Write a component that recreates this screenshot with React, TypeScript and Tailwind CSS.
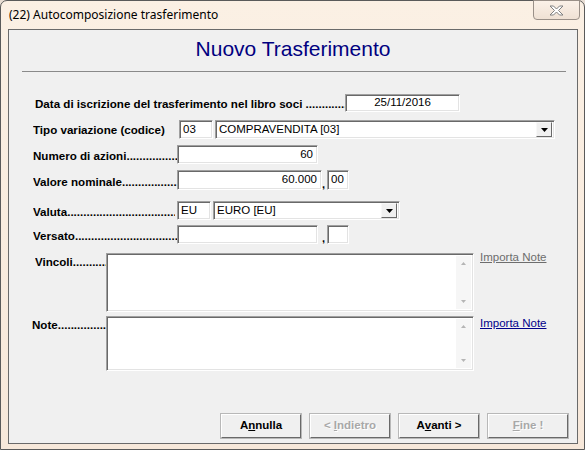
import React from "react";

const ui = { fontFamily: '"Liberation Sans", Arial, sans-serif' };

const sunken =
  "bg-white border border-solid border-t-[#a0a0a0] border-l-[#a0a0a0] border-b-white border-r-white shadow-[inset_1px_1px_0_#696969,inset_-1px_-1px_0_#e3e3e3]";

function Field({ w, h = 19, value = "", align = "left" }: { w: number; h?: number; value?: string; align?: "left" | "right" | "center" }) {
  const a = align === "right" ? "justify-end pr-[4px]" : align === "center" ? "justify-center" : "justify-start pl-[3px]";
  return (
    <div className={`${sunken} flex items-center ${a} text-[11.5px] text-black shrink-0`} style={{ width: w, height: h }}>
      {value}
    </div>
  );
}

function Combo({ w, value }: { w: number; value: string }) {
  return (
    <div className={`${sunken} flex items-center shrink-0 h-[19px] p-[2px]`} style={{ width: w }}>
      <span className="flex-1 pl-[1px] text-[11.5px] text-black whitespace-nowrap">{value}</span>
      <div className="w-[16px] h-[15px] bg-[#f0f0f0] border border-solid border-t-[#f8f8f8] border-l-[#f8f8f8] border-b-[#696969] border-r-[#696969] flex items-center justify-center">
        <svg width="7" height="4" viewBox="0 0 7 4">
          <path d="M0 0h7L3.5 4z" fill="#000" />
        </svg>
      </div>
    </div>
  );
}

function Label({ w, text, ml = 24, dots = true }: { w: number; text: string; ml?: number; dots?: boolean }) {
  return (
    <div className="shrink-0 overflow-hidden whitespace-nowrap text-[11.6px] font-bold text-black" style={{ width: w, marginLeft: ml }}>
      {text}
      {dots ? "........................................" : ""}
    </div>
  );
}

function Memo({ h }: { h: number }) {
  return (
    <div className={`${sunken} flex shrink-0 w-[368px] p-[2px]`} style={{ height: h }}>
      <div className="flex-1" />
      <div className="w-[15px] bg-[#f6f6f6] flex flex-col justify-between items-center py-[6px]">
        <svg width="5" height="3" viewBox="0 0 5 3">
          <path d="M0 3h5L2.5 0z" fill="#b5b5b5" />
        </svg>
        <svg width="5" height="3" viewBox="0 0 5 3">
          <path d="M0 0h5L2.5 3z" fill="#b5b5b5" />
        </svg>
      </div>
    </div>
  );
}

function Btn({ children, disabled }: { children: React.ReactNode; disabled?: boolean }) {
  return (
    <div
      className={`w-[80px] h-[24px] flex items-center justify-center whitespace-pre bg-[#f0f0f0] border border-solid border-t-white border-l-white border-b-[#696969] border-r-[#696969] shadow-[0_0_0_1px_#b8b8b8] text-[11.5px] font-bold ${
        disabled ? "text-[#a8a8a8] [text-shadow:1px_1px_0_#ffffff]" : "text-black"
      }`}
    >
      {children}
    </div>
  );
}

export default function App() {
  return (
    <div className="w-[585px] h-[450px] bg-[#e8ddd3] overflow-hidden" style={ui}>
      <div className="relative w-[585px] h-[450px] rounded-t-[7px] border border-solid border-[#5a5a5a] bg-gradient-to-b from-[#fbf0e4] to-[#f7e8da] flex flex-col">
        <div className="h-[28px] flex items-center pl-[8px] text-[12px] text-black" style={{ fontFamily: '"Noto Sans", "Liberation Sans", sans-serif' }}>
          (22) Autocomposizione trasferimento
        </div>
        <div className="absolute top-[-1px] right-[4px] w-[47px] h-[20px] rounded-b-[4px] border border-solid border-[#9a9088] bg-gradient-to-b from-[#fbf1e8] to-[#efe1d4] flex items-center justify-center">
          <svg width="15" height="11" viewBox="0 0 15 11">
            <path
              d="M1 1h3.5L7.5 4 10.5 1H14L9.5 5.5 14 10h-3.5L7.5 7 4.5 10H1l4.5-4.5z"
              fill="#fff"
              stroke="#7f7f7f"
              strokeWidth="1"
              strokeLinejoin="round"
            />
          </svg>
        </div>
        <div className="ml-[7px] w-[570px] h-[415px] border border-solid border-[#6a6a6a] bg-[#f0f0f0] flex flex-col">
          <div className="mt-[5px] h-[28px] flex items-center justify-center text-[21px] text-[#000080]">
            Nuovo Trasferimento
          </div>
          <div className="mt-[8px] ml-[13px] w-[544px] h-[1px] bg-[#8a8a8a]" />

          <div className="mt-[22px] flex items-end h-[18px]">
            <Label w={310} ml={26} text="Data di iscrizione del trasferimento nel libro soci " />
            <Field w={115} h={18} value="25/11/2016" align="center" />
          </div>

          <div className="mt-[8px] flex items-center gap-[2px]">
            <Label w={144} text="Tipo variazione (codice)" dots={false} />
            <Field w={34} value="03" />
            <Combo w={340} value="COMPRAVENDITA [03]" />
          </div>

          <div className="mt-[6px] flex items-end">
            <Label w={144} text="Numero di azioni" />
            <Field w={141} value="60" align="right" />
          </div>

          <div className="mt-[6px] flex items-end">
            <Label w={144} text="Valore nominale" />
            <Field w={145} h={20} value="60.000" align="right" />
            <span className="w-[5px] text-[11px] font-bold leading-[12px] self-end">,</span>
            <Field w={22} h={20} value="00" />
          </div>

          <div className="mt-[11px] flex items-end gap-[2px]">
            <Label w={142} text="Valuta" />
            <Field w={34} value="EU" />
            <Combo w={187} value="EURO [EU]" />
          </div>

          <div className="mt-[5px] flex items-end">
            <Label w={144} text="Versato" />
            <Field w={141} value="" />
            <span className="w-[9px] pl-[4px] text-[11px] font-bold leading-[12px] self-end">,</span>
            <Field w={22} value="" />
          </div>

          <div className="mt-[9px] flex items-start">
            <div className="mt-[0px]">
              <Label w={71} ml={26} text="Vincoli" />
            </div>
            <Memo h={59} />
            <span className="ml-[6px] mt-[-4px] text-[11.5px] text-[#6d6d6d] underline">Importa Note</span>
          </div>

          <div className="mt-[4px] flex items-start">
            <div className="mt-[0px]">
              <Label w={74} ml={23} text="Note" />
            </div>
            <Memo h={55} />
            <span className="ml-[6px] mt-[-1px] text-[11.5px] text-[#00008b] underline">Importa Note</span>
          </div>

          <div className="mt-[43px] ml-[212px] flex gap-[9px]">
            <Btn>
              A<u>n</u>nulla
            </Btn>
            <Btn disabled>
              {"< "}
              <u>I</u>ndietro
            </Btn>
            <Btn>
              A<u>v</u>anti {">"}
            </Btn>
            <Btn disabled>
              <u>F</u>ine !
            </Btn>
          </div>
        </div>
      </div>
    </div>
  );
}
